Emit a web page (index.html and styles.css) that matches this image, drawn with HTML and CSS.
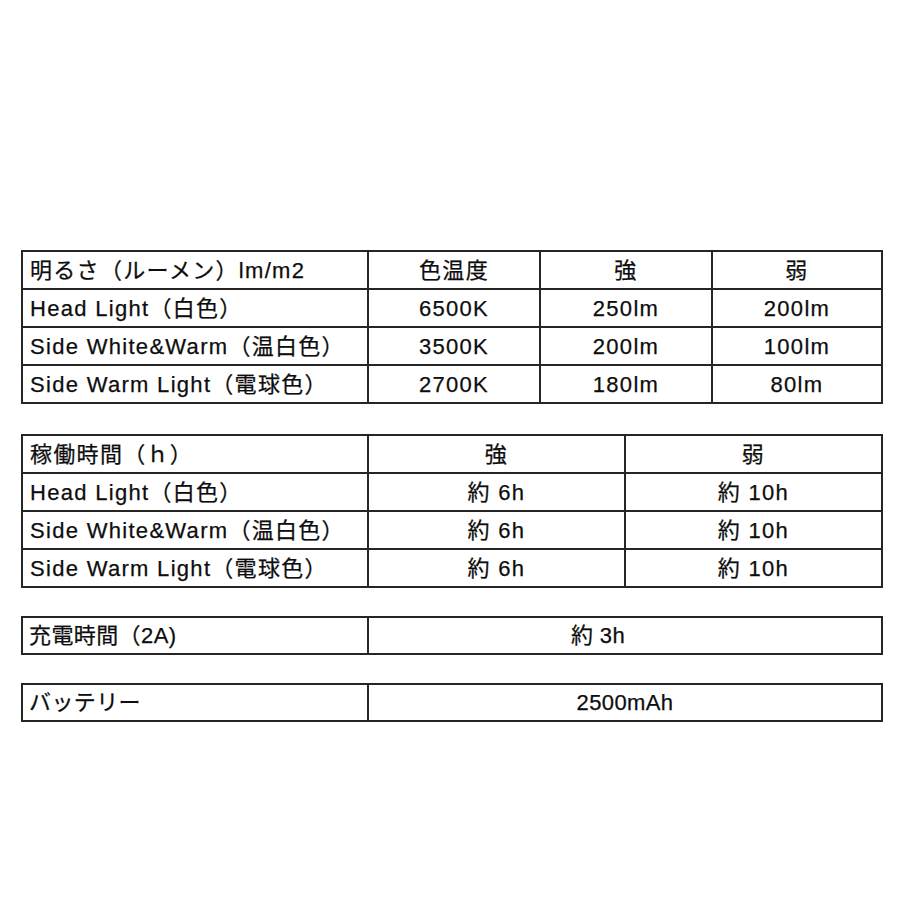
FILE: index.html
```html
<!DOCTYPE html>
<html lang="ja">
<head>
<meta charset="utf-8">
<link rel="stylesheet" href="styles.css">
</head>
<body>
<main class="page">
  <section class="grid cols4">
    <div class="cell label">明るさ（ルーメン）lm/m2</div>
    <div class="cell">色温度</div>
    <div class="cell">強</div>
    <div class="cell">弱</div>
    <div class="cell label">Head Light（白色）</div>
    <div class="cell">6500K</div>
    <div class="cell">250lm</div>
    <div class="cell">200lm</div>
    <div class="cell label">Side White&amp;Warm（温白色）</div>
    <div class="cell">3500K</div>
    <div class="cell">200lm</div>
    <div class="cell">100lm</div>
    <div class="cell label">Side Warm Light（電球色）</div>
    <div class="cell">2700K</div>
    <div class="cell">180lm</div>
    <div class="cell">80lm</div>
  </section>

  <section class="grid cols3">
    <div class="cell label">稼働時間（ｈ）</div>
    <div class="cell">強</div>
    <div class="cell">弱</div>
    <div class="cell label">Head Light（白色）</div>
    <div class="cell">約 6h</div>
    <div class="cell">約 10h</div>
    <div class="cell label">Side White&amp;Warm（温白色）</div>
    <div class="cell">約 6h</div>
    <div class="cell">約 10h</div>
    <div class="cell label">Side Warm Light（電球色）</div>
    <div class="cell">約 6h</div>
    <div class="cell">約 10h</div>
  </section>

  <section class="grid cols2 narrow">
    <div class="cell label">充電時間（2A)</div>
    <div class="cell shift">約 3h</div>
  </section>

  <section class="grid cols2 narrow">
    <div class="cell label">バッテリー</div>
    <div class="cell">2500mAh</div>
  </section>
</main>
</body>
</html>
```

FILE: styles.css
```css
html, body {
  margin: 0;
  padding: 0;
  background: #ffffff;
}

.page {
  width: 920px;
  height: 920px;
  box-sizing: border-box;
  padding: 250px 0 0 21px;
  display: flex;
  flex-direction: column;
  gap: 30px;
  font-family: "Liberation Sans", "Noto Sans CJK JP", sans-serif;
  font-size: 22px;
  letter-spacing: 1.3px;
  color: #0d0d0d;
  -webkit-text-stroke: 0.25px #0d0d0d;
}

.grid {
  display: grid;
  width: 862px;
  box-sizing: border-box;
  background: #262626;
  padding: 2px;
  gap: 2px;
  grid-auto-rows: 36px;
}

.cols4 {
  grid-template-columns: 344px 170px 170px 168px;
}

.cols3 {
  grid-template-columns: 344px 255px 255px;
}

.cols2 {
  grid-template-columns: 344px 512px;
  grid-auto-rows: 35px;
}

.grid + .narrow {
  margin-top: -2px;
}

.cell {
  background: #ffffff;
  display: flex;
  align-items: center;
  justify-content: center;
  white-space: nowrap;
  line-height: 1;
  padding-top: 1px;
}

.cell.label {
  justify-content: flex-start;
  padding-left: 7px;
}

.narrow .cell {
  letter-spacing: 0.4px;
}

.narrow .cell.label {
  padding-left: 6px;
}

.cell.shift {
  padding-right: 54px;
}
```
